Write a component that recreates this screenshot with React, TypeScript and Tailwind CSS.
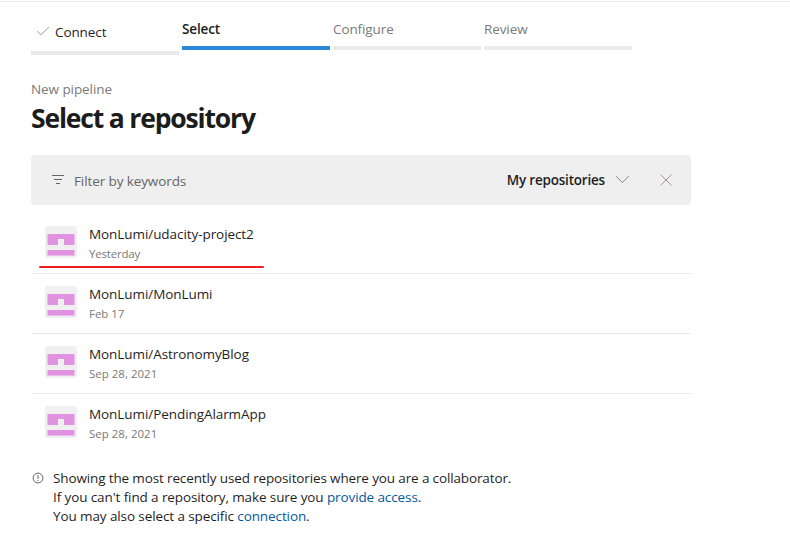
const steps = [
  { name: 'Select', text: 'font-semibold text-[#1c1c1c] tracking-[-0.15px]', bar: 'bg-[#2b88d8]' },
  { name: 'Configure', text: 'text-[#7a7a7a] tracking-[-0.1px]', bar: 'bg-[#eaeaea]' },
  { name: 'Review', text: 'text-[#7a7a7a] tracking-[-0.1px]', bar: 'bg-[#eaeaea]' },
];

const repos = [
  { name: 'MonLumi/udacity-project2', date: 'Yesterday', marked: true, dateCls: 'tracking-[-0.2px]' },
  { name: 'MonLumi/MonLumi', date: 'Feb 17', marked: false, dateCls: 'tracking-[-0.05px]' },
  { name: 'MonLumi/AstronomyBlog', date: 'Sep 28, 2021', marked: false, dateCls: 'tracking-[0px]' },
  { name: 'MonLumi/PendingAlarmApp', date: 'Sep 28, 2021', marked: false, dateCls: 'tracking-[0px]' },
];

function Avatar() {
  return (
    <svg className="block h-8 w-8 shrink-0" viewBox="0 0 32 32" shapeRendering="crispEdges">
      <rect width="32" height="32" rx="2" fill="#f0f0f0" shapeRendering="auto" />
      <path d="M2 8h28v11H19v-6h-6v6H2z" fill="#ebbdeb" />
      <path d="M3 8h26v11H19v-6h-6v6H3z" fill="#e093e0" />
      <path d="M2 24h28v6H2z" fill="#ebbdeb" />
      <path d="M3 24h26v5H3z" fill="#e093e0" />
    </svg>
  );
}

export default function App() {
  return (
    <div className="h-[541px] w-[790px] overflow-hidden bg-white pt-px font-['Open_Sans','Noto_Sans',sans-serif] text-[13.5px] leading-5 text-[#1f1f1f]">
      <div className="h-px bg-[#eaeaea]" />
      <div className="ml-[31px] w-[660px]">
        <nav className="flex h-[53px] items-start gap-[3px] pt-[17px] whitespace-nowrap">
          <div className="w-[148px] pt-[3px]">
            <div className="flex h-[29px] items-start">
              <svg className="mt-[3px] mr-[5px] ml-[6px] h-[12px] w-[13px]" viewBox="0 0 13 12" fill="none" stroke="#a39898">
                <path d="M.3 6.1l3.7 3.7L12 1.8" />
              </svg>
              <span className="tracking-[-0.1px]">Connect</span>
            </div>
            <div className="h-1 bg-[#eaeaea]" />
          </div>
          {steps.map((s) => (
            <div key={s.name} className="w-[148px]">
              <div className={`h-[27px] ${s.text}`}>{s.name}</div>
              <div className={`h-1 ${s.bar}`} />
            </div>
          ))}
        </nav>
        <div className="mt-6 h-5 tracking-[-0.08px] text-[#7a7a7a]">New pipeline</div>
        <h1 className="h-[40px] text-[26.5px] leading-[38px] font-bold tracking-[-1.17px] text-[#1c1c1c]">Select a repository</h1>
        <div className="mt-4 flex h-[50px] items-center rounded bg-[#efefef] pr-[18px] pl-5">
          <svg className="mr-[9px] h-[12px] w-[14px]" viewBox="0 0 14 12" fill="none" stroke="#666" shapeRendering="crispEdges">
            <path d="M1 1.5h12M3 5.5h8M5 9.5h4" />
          </svg>
          <span className="mt-0.5 tracking-[-0.1px] text-[#666]">Filter by keywords</span>
          <span className="ml-auto font-semibold tracking-[-0.2px]">My repositories</span>
          <svg className="mr-[29px] mb-[2px] ml-[10px] h-[10px] w-[15px]" viewBox="0 0 15 10" fill="none" stroke="#8b858b">
            <path d="M.8 2l6.5 6.5L13.8 2" />
          </svg>
          <svg className="h-[14px] w-[14px]" viewBox="0 0 14 14" fill="none" stroke="#9c969c">
            <path d="M1.5 1.5l11 11M12.5 1.5l-11 11" />
          </svg>
        </div>
        <ul className="mt-[9px]">
          {repos.map((r) => (
            <li key={r.name} className="relative flex h-[60px] border-b border-[#eaeaea] pt-3 pl-[14px] last:border-transparent">
              <Avatar />
              <div className="-mt-[2px] ml-3">
                <div className="h-5 tracking-[-0.07px]">{r.name}</div>
                <div className={`text-[11.5px] text-[#7a7a7a] ${r.dateCls}`}>{r.date}</div>
              </div>
              {r.marked && <div className="absolute top-[52px] left-[8px] h-[2px] w-[225px] rounded-full bg-[#ed1c24]" />}
            </li>
          ))}
        </ul>
        <div className="mt-[15px] flex leading-[19px]">
          <svg className="mt-[3px] mr-[9px] ml-[1px] h-[12px] w-[12px]" viewBox="0 0 12 12" fill="none" stroke="#666">
            <circle cx="6" cy="6" r="4.9" />
            <path d="M6 3v4M6 8v1" />
          </svg>
          <div className="tracking-[-0.105px] whitespace-nowrap">
            <p className="tracking-[-0.135px]">Showing the most recently used repositories where you are a collaborator.</p>
            <p>If you can't find a repository, make sure you <a className="text-[#005a9e]">provide access</a>.</p>
            <p>You may also select a specific <a className="text-[#005a9e]">connection</a>.</p>
          </div>
        </div>
      </div>
    </div>
  );
}
